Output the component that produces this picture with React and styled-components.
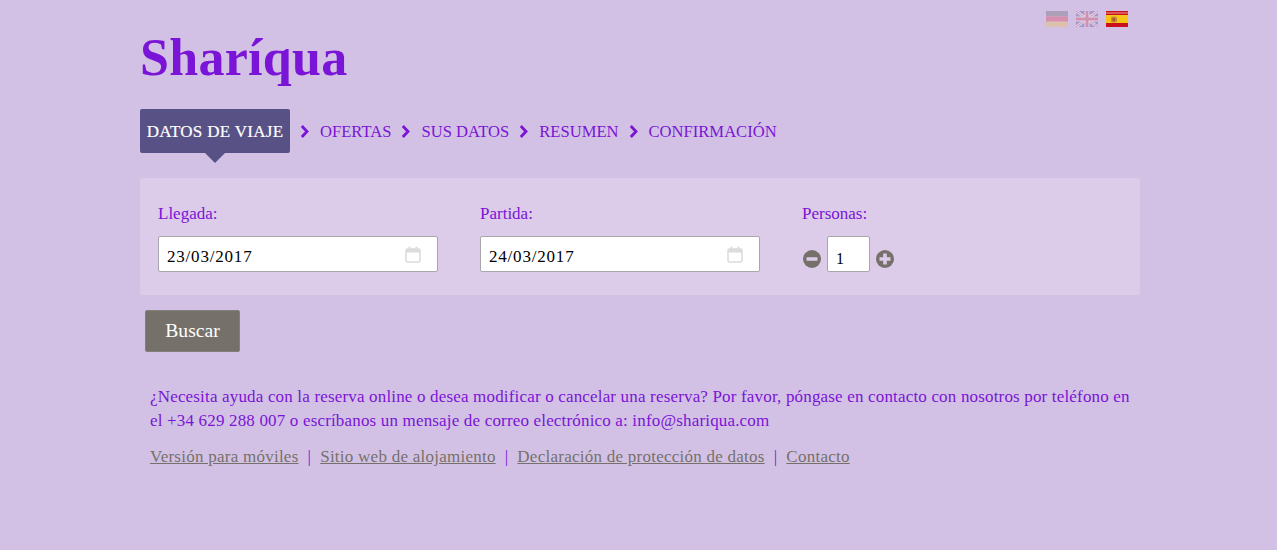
import React from "react";
import styled, {createGlobalStyle} from "styled-components";

const serif = `"Liberation Serif", "DejaVu Serif", serif`;
const purple = "#7a14d6";

const GlobalStyle = createGlobalStyle`
  html, body {
    margin: 0;
    padding: 0;
    background: #d3c1e5;
  }
  body {
    font-family: ${serif};
    color: ${purple};
    font-size: 16px;
  }
`;

const Page = styled.div`
  width: 1000px;
  height: 550px;
  margin-left: 140px;
  overflow: hidden;
`;

const FlagBar = styled.div`
  display: flex;
  justify-content: flex-end;
  gap: 8px;
  padding: 11px 12px 0 0;
  height: 16px;
`;

const Flag = styled.svg`
  display: block;
  width: 22px;
  height: 16px;
  opacity: ${p => (p.$active ? 1 : 0.3)};
`;

const Logo = styled.h1`
  margin: 0;
  padding-top: 3px;
  height: 55px;
  font-size: 52px;
  line-height: 55px;
  font-weight: bold;
  color: ${purple};
  letter-spacing: 0.3px;
`;

const Steps = styled.nav`
  display: flex;
  align-items: center;
  height: 44px;
  margin-top: 24px;
`;

const ActiveStep = styled.div`
  position: relative;
  box-sizing: border-box;
  width: 150px;
  height: 44px;
  line-height: 45px;
  text-align: center;
  border-radius: 2px;
  background: #575186;
  color: #fff;
  font-size: 17px;
  letter-spacing: 0.3px;
  white-space: nowrap;
  -webkit-text-stroke: 0.2px #fff;

  &::after {
    content: '';
    position: absolute;
    left: 65px;
    top: 44px;
    border-left: 10px solid transparent;
    border-right: 10px solid transparent;
    border-top: 10px solid #575186;
  }
`;

const Step = styled.a`
  padding-top: 1px;
  font-size: 16.6px;
  color: ${purple};
`;

const Chevron = styled.svg`
  display: block;
  width: 9px;
  height: 13px;
  margin: 0 11px 0 10px;
`;

const SearchPanel = styled.section`
  display: flex;
  height: 117px;
  margin-top: 25px;
  padding-left: 18px;
  box-sizing: border-box;
  background: #dccbe9;
  border-radius: 2px;
`;

const Field = styled.div`
  width: 322px;
  padding-top: 27px;
`;

const Label = styled.label`
  display: block;
  height: 18px;
  line-height: 18px;
  font-size: 17px;
  color: ${purple};
`;

const DateBox = styled.div`
  display: flex;
  align-items: center;
  justify-content: space-between;
  box-sizing: border-box;
  width: 280px;
  height: 36px;
  margin-top: 13px;
  padding: 0 16px 0 8px;
  background: #fff;
  border: 1px solid #aaa6ae;
  border-radius: 2px;
  color: #000;
  font-size: 17px;
`;

const DateText = styled.span`
  padding-top: 5px;
  letter-spacing: 0.8px;
`;

const Stepper = styled.div`
  display: flex;
  align-items: center;
  margin: 13px 0 0 1px;
  height: 36px;
`;

const RoundIcon = styled.svg`
  display: block;
  width: 18px;
  height: 18px;
  margin-top: 10px;
`;

const CountBox = styled.div`
  box-sizing: border-box;
  width: 43px;
  height: 36px;
  margin: 0 6px;
  padding: 5px 0 0 8px;
  line-height: 33px;
  background: #fff;
  border: 1px solid #aaa6ae;
  border-radius: 2px;
  color: #000;
  font-size: 16px;
`;

const SearchButton = styled.button`
  display: block;
  width: 95px;
  height: 42px;
  margin: 15px 0 0 5px;
  padding: 0;
  background: #75716a;
  border: 1px solid #827e78;
  border-radius: 2px;
  color: #fff;
  font-family: ${serif};
  font-size: 19.6px;
`;

const Help = styled.p`
  margin: 33px 0 0 10px;
  width: 980px;
  font-size: 17px;
  letter-spacing: 0.17px;
  line-height: 24px;
  color: ${purple};
`;

const FooterLinks = styled.div`
  display: flex;
  align-items: center;
  margin: 12px 0 0 10px;
  font-size: 17px;
  letter-spacing: 0.25px;
  line-height: 24px;
`;

const FooterLink = styled.a`
  color: #75716a;
  text-decoration: underline;
`;

const Sep = styled.span`
  margin: 0 9px;
  color: ${purple};
`;

function GermanFlag() {
    return (
        <Flag viewBox="0 0 22 16">
            <rect width="22" height="5.4" fill="#555"/>
            <rect y="5.4" width="22" height="5.3" fill="#dd2233"/>
            <rect y="10.7" width="22" height="5.3" fill="#f2c230"/>
        </Flag>
    );
}

function BritishFlag() {
    return (
        <Flag viewBox="0 0 22 16">
            <rect width="22" height="16" fill="#2b3f96"/>
            <path d="M0 0L22 16M22 0L0 16" stroke="#fff" strokeWidth="3"/>
            <path d="M0 0L22 16M22 0L0 16" stroke="#d2232a" strokeWidth="1"/>
            <path d="M11 0V16M0 8H22" stroke="#fff" strokeWidth="5"/>
            <path d="M11 0V16M0 8H22" stroke="#d2232a" strokeWidth="3"/>
        </Flag>
    );
}

function SpanishFlag() {
    return (
        <Flag $active viewBox="0 0 22 16">
            <rect width="22" height="16" fill="#c8101e"/>
            <rect y="1" width="22" height="2" fill="#dc5a5a"/>
            <rect y="4" width="22" height="8" fill="#f5c518"/>
            <rect x="5" y="5.5" width="6" height="6" rx="2" fill="#c08a3a"/>
            <rect x="6.5" y="7" width="2.5" height="3" fill="#b5502a"/>
        </Flag>
    );
}

function StepChevron() {
    return (
        <Chevron viewBox="0 0 9 13">
            <path d="M1.8 1L7 6.5L1.8 12" fill="none" stroke={purple} strokeWidth="2.8"/>
        </Chevron>
    );
}

function CalendarIcon() {
    return (
        <svg width="16" height="17" viewBox="0 0 16 17">
            <rect x="1" y="3" width="14" height="13" rx="1.5" fill="none" stroke="#dcdcdc" strokeWidth="1.6"/>
            <rect x="1" y="3" width="14" height="3.5" fill="#dcdcdc"/>
            <rect x="3.5" y="0.5" width="2" height="4" rx="1" fill="#dcdcdc"/>
            <rect x="10.5" y="0.5" width="2" height="4" rx="1" fill="#dcdcdc"/>
        </svg>
    );
}

function MinusIcon() {
    return (
        <RoundIcon viewBox="0 0 18 18">
            <circle cx="9" cy="9" r="9" fill="#75716a"/>
            <rect x="3.5" y="7.2" width="11" height="3.6" rx="0.6" fill="#dccbe9"/>
        </RoundIcon>
    );
}

function PlusIcon() {
    return (
        <RoundIcon viewBox="0 0 18 18">
            <circle cx="9" cy="9" r="9" fill="#75716a"/>
            <path d="M7.2 3.5h3.6v3.7h3.7v3.6h-3.7v3.7H7.2v-3.7H3.5V7.2h3.7z" fill="#dccbe9"/>
        </RoundIcon>
    );
}

const steps = ["OFERTAS", "SUS DATOS", "RESUMEN", "CONFIRMACIÓN"];
const links = ["Versión para móviles", "Sitio web de alojamiento", "Declaración de protección de datos", "Contacto"];

export default function App() {
    return (
        <Page>
            <GlobalStyle/>
            <FlagBar>
                <GermanFlag/>
                <BritishFlag/>
                <SpanishFlag/>
            </FlagBar>
            <Logo>Sharíqua</Logo>
            <Steps>
                <ActiveStep>DATOS DE VIAJE</ActiveStep>
                {steps.map(item => (
                    <React.Fragment key={item}>
                        <StepChevron/>
                        <Step>{item}</Step>
                    </React.Fragment>
                ))}
            </Steps>
            <SearchPanel>
                <Field>
                    <Label>Llegada:</Label>
                    <DateBox><DateText>23/03/2017</DateText><CalendarIcon/></DateBox>
                </Field>
                <Field>
                    <Label>Partida:</Label>
                    <DateBox><DateText>24/03/2017</DateText><CalendarIcon/></DateBox>
                </Field>
                <Field>
                    <Label>Personas:</Label>
                    <Stepper>
                        <MinusIcon/>
                        <CountBox>1</CountBox>
                        <PlusIcon/>
                    </Stepper>
                </Field>
            </SearchPanel>
            <SearchButton>Buscar</SearchButton>
            <Help>
                ¿Necesita ayuda con la reserva online o desea modificar o cancelar una reserva? Por favor, póngase en contacto con nosotros por teléfono en el +34 629 288 007 o escríbanos un mensaje de correo electrónico a: info@shariqua.com
            </Help>
            <FooterLinks>
                {links.map((item, id) => (
                    <React.Fragment key={item}>
                        {id > 0 && <Sep>|</Sep>}
                        <FooterLink href="#">{item}</FooterLink>
                    </React.Fragment>
                ))}
            </FooterLinks>
        </Page>
    );
}
